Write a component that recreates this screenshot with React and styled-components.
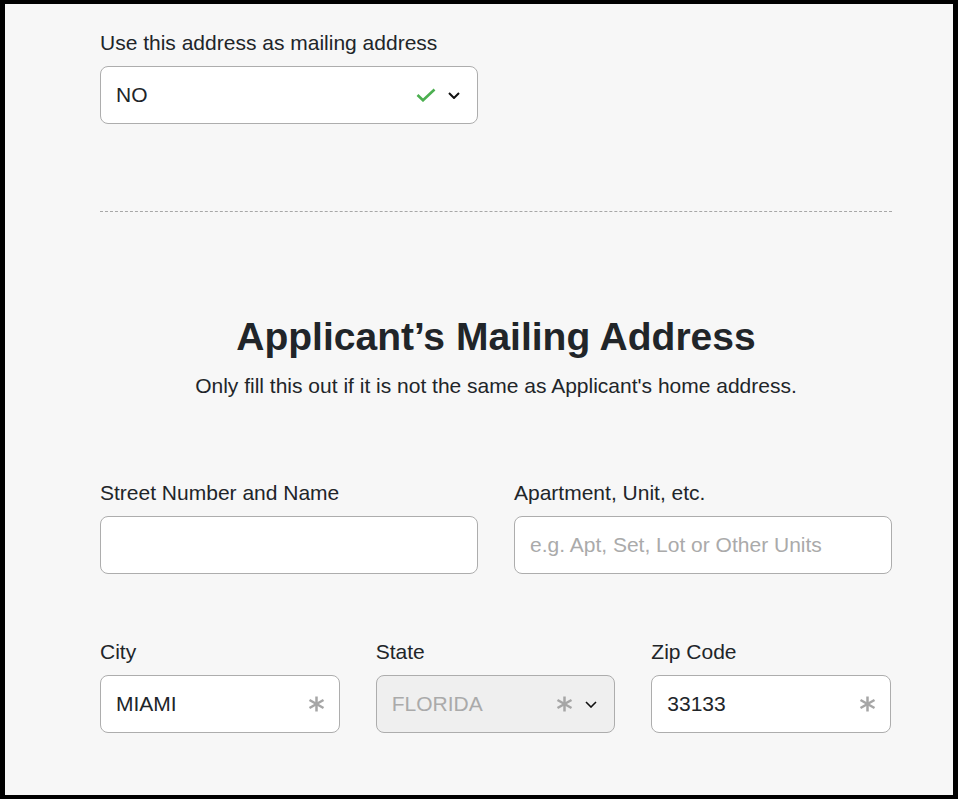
import React from "react";
import styled, { createGlobalStyle } from "styled-components";

const GlobalStyle = createGlobalStyle`
  html, body { margin: 0; padding: 0; background: #000; }
  body { font-family: "Liberation Sans", Arial, sans-serif; }
  * { box-sizing: border-box; }
`;

const Frame = styled.div`
  margin: 4px 5px;
  min-height: 791px;
  background: #f7f7f7;
  padding: 24px 61px 40px 95px;
  color: #212529;
  font-family: "Liberation Sans", Arial, sans-serif;
`;

const Group = styled.div`
  display: flex;
  flex-direction: column;
  width: ${(p) => p.$width || "auto"};
`;

const Label = styled.label`
  font-size: 21px;
  line-height: 30px;
  margin-bottom: 8px;
  color: #212529;
`;

const Field = styled.div`
  height: 58px;
  display: flex;
  align-items: center;
  gap: 12px;
  padding: 0 ${(p) => (p.$chevron ? "17px" : "14px")} 0 15px;
  border: 1px solid #adadad;
  border-radius: 8px;
  background: ${(p) => (p.$disabled ? "#efefef" : "#fff")};
  font-size: 21px;
`;

const Value = styled.span`
  flex: 1;
  color: ${(p) => (p.$muted ? "#aaaaaa" : "#212529")};
  white-space: nowrap;
`;

const Divider = styled.hr`
  margin: 87px 0 0;
  border: none;
  border-top: 1px dashed #a8a8a8;
  height: 0;
`;

const Heading = styled.h2`
  margin: 102px 0 0;
  text-align: center;
  font-size: 39px;
  line-height: 46px;
  font-weight: 700;
  color: #212529;
`;

const Subtitle = styled.p`
  margin: 11px 0 0;
  text-align: center;
  font-size: 21px;
  line-height: 30px;
`;

const Row = styled.div`
  display: grid;
  grid-template-columns: repeat(${(p) => p.$cols}, 1fr);
  column-gap: 36px;
  width: ${(p) => (p.$cols === 3 ? "calc(100% - 1px)" : "100%")};
  margin-top: ${(p) => p.$mt}px;
`;

const Check = () => (
  <svg width="20" height="14" viewBox="0 0 20 14" fill="none">
    <polyline points="1.5,7 7,12.3 18.5,1.5" stroke="#4caf50" strokeWidth="2.6" strokeLinecap="butt" strokeLinejoin="miter" />
  </svg>
);

const Chevron = ({ w = 2 }) => (
  <svg width="12" height="7" viewBox="0 0 12 7" fill="none">
    <polyline points="1,1 6,6 11,1" stroke="#111" strokeWidth={w} />
  </svg>
);

const Asterisk = () => (
  <svg width="17" height="16" viewBox="0 0 17 16" fill="none">
    <g stroke="#a6a6a6" strokeWidth="2.5">
      <line x1="8.5" y1="0.5" x2="8.5" y2="15.5" />
      <line x1="1.5" y1="4" x2="15.5" y2="12" />
      <line x1="1.5" y1="12" x2="15.5" y2="4" />
    </g>
  </svg>
);

export default function App() {
  return (
    <>
      <GlobalStyle />
      <Frame>
        <Group $width="378px">
          <Label>Use this address as mailing address</Label>
          <Field $chevron>
            <Value>NO</Value>
            <Check />
            <Chevron />
          </Field>
        </Group>

        <Divider />

        <Heading>Applicant’s Mailing Address</Heading>
        <Subtitle>Only fill this out if it is not the same as Applicant's home address.</Subtitle>

        <Row $cols={2} $mt={77}>
          <Group>
            <Label>Street Number and Name</Label>
            <Field>
              <Value></Value>
            </Field>
          </Group>
          <Group>
            <Label>Apartment, Unit, etc.</Label>
            <Field>
              <Value $muted>e.g. Apt, Set, Lot or Other Units</Value>
            </Field>
          </Group>
        </Row>

        <Row $cols={3} $mt={63}>
          <Group>
            <Label>City</Label>
            <Field>
              <Value>MIAMI</Value>
              <Asterisk />
            </Field>
          </Group>
          <Group>
            <Label>State</Label>
            <Field $disabled $chevron>
              <Value $muted>FLORIDA</Value>
              <Asterisk />
              <Chevron w={1.6} />
            </Field>
          </Group>
          <Group>
            <Label>Zip Code</Label>
            <Field>
              <Value>33133</Value>
              <Asterisk />
            </Field>
          </Group>
        </Row>
      </Frame>
    </>
  );
}
